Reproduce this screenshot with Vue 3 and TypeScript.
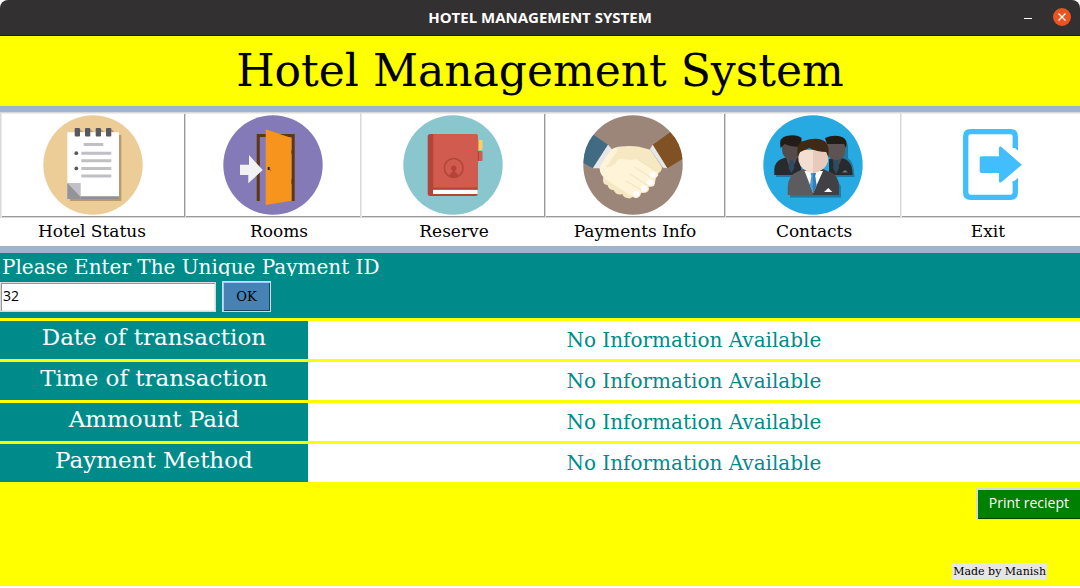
<script setup lang="ts">
import { ref } from 'vue'

interface NavItem {
  id: string
  label: string
}

interface DetailRow {
  name: string
  value: string
}

const navItems: NavItem[] = [
  { id: 'status', label: 'Hotel Status' },
  { id: 'rooms', label: 'Rooms' },
  { id: 'reserve', label: 'Reserve' },
  { id: 'payments', label: 'Payments Info' },
  { id: 'contacts', label: 'Contacts' },
  { id: 'exit', label: 'Exit' },
]

const empty = 'No Information Available'
const rows = ref<DetailRow[]>([
  { name: 'Date of transaction', value: empty },
  { name: 'Time of transaction', value: empty },
  { name: 'Ammount Paid', value: empty },
  { name: 'Payment Method', value: empty },
])

const paymentId = ref('32')
</script>

<template>
  <div class="window">
    <header class="titlebar">
      <span class="titlebar-text">HOTEL MANAGEMENT SYSTEM</span>
      <div class="window-controls">
        <button type="button" class="control" aria-label="Minimize">
          <svg width="10" height="18" viewBox="0 0 10 18"><path d="M1 10.500h8" stroke="#fff" stroke-width="1" /></svg>
        </button>
        <button type="button" class="control" aria-label="Close">
          <svg width="18" height="18" viewBox="0 0 18 18">
            <circle cx="9" cy="9" r="9" fill="#e95420" />
            <path d="M5.500 5.500l7 7M12.500 5.500l-7 7" stroke="#fff" stroke-width="1.300" />
          </svg>
        </button>
      </div>
    </header>

    <main class="content">
      <h1 class="heading">Hotel Management System</h1>

      <nav class="nav">
        <div class="nav-buttons">
          <button v-for="item in navItems" :id="item.id" :key="item.id" type="button" class="nav-button" :class="item.id">
            <svg v-if="item.id === 'status'" class="icon" viewBox="0 0 100 100">
              <circle cx="50" cy="50" r="49.700" fill="#eccd98" />
              <path d="M27 20h51.300v66H27z" fill="#b99a6d" />
              <path d="M24.300 17.300H76V84H24.300z" fill="#fff" />
              <path d="M24.300 81.300H76V84H24.300z" fill="#8f9096" />
              <path d="M24.300 68h13.400v16H24.300z" fill="#c0c0c6" />
              <path d="M24.300 68l13.400 14v2H24.300z" fill="#93949a" />
              <path d="M37 14l3 3h-3zM47.300 14l3 3h-3zM58 14l3 3h-3zM68.300 14l3 3h-3z" fill="#b99a6d" />
              <g fill="#58595e">
                <rect x="31.700" y="13" width="5.300" height="8.500" rx="1" />
                <rect x="42" y="13" width="5.300" height="8.500" rx="1" />
                <rect x="52.700" y="13" width="5.300" height="8.500" rx="1" />
                <rect x="63" y="13" width="5.300" height="8.500" rx="1" />
                <circle cx="33.300" cy="38.200" r="1.900" />
                <circle cx="33.300" cy="53.400" r="1.900" />
              </g>
              <path d="M40.700 29.500h19.600M38.300 38.200h30M38.300 45.800h30M38.300 53.400h30M38.300 61h30" stroke="#bfbfc4" stroke-width="3" />
            </svg>

            <svg v-else-if="item.id === 'rooms'" class="icon" viewBox="0 0 100 100">
              <circle cx="50" cy="50" r="49.700" fill="#847ab8" />
              <path d="M33.700 86V19h38v67h-3.200V22H36.800v64z" fill="#5f3813" />
              <path d="M42.700 14.300L68.500 23v62.700L42.700 90z" fill="#f7941e" />
              <path d="M68.800 35v4M68.800 64v5" stroke="#4a2c14" stroke-width=".6" />
              <path d="M44.700 52h2v3h-2z" fill="#33231a" />
              <path d="M46.500 54l1.400 2" stroke="#7d5a2c" stroke-width=".8" />
              <path d="M17 49.700h9V40l13.700 15-14.400 13.300V60H17z" fill="#f2f2f2" />
            </svg>

            <svg v-else-if="item.id === 'reserve'" class="icon" viewBox="0 0 100 100">
              <circle cx="50" cy="50" r="49.700" fill="#8ac6cd" />
              <rect x="72" y="25" width="7.500" height="10" rx="1" fill="#fbd063" />
              <rect x="72" y="36" width="7.500" height="10" rx="1" fill="#d15b4f" />
              <path d="M74.700 25H76v10h-1.300z" fill="#d6a955" />
              <path d="M74.700 36H76v10h-1.300z" fill="#af4337" />
              <rect x="24.700" y="19" width="50" height="62" rx="2.500" fill="#b44439" />
              <path d="M30.300 19H73q1.700 0 1.700 2v51.500H30.300z" fill="#d15b4f" />
              <path d="M30.300 74h44.400v1H30.300z" fill="#d15b4f" />
              <path d="M30 75h44.700v4H30z" fill="#fff" />
              <circle cx="50.700" cy="53" r="9.400" fill="none" stroke="#b44439" stroke-width="1.500" />
              <circle cx="50.700" cy="53.200" r="2.700" fill="#b44439" />
              <path d="M49.300 54h2.800v3q2.500 1 3.300 5-4.700 2.300-9.400 0 .8-4 3.300-5z" fill="#b44439" />
            </svg>

            <svg v-else-if="item.id === 'payments'" class="icon" viewBox="0 0 100 100">
              <circle cx="50" cy="50" r="49.700" fill="#9c867a" />
              <path d="M10.500 19.700L25 29.700 9.800 53.300.5 48Q.5 32 10.500 19.700z" fill="#416b82" />
              <path d="M87.300 17.300L69.700 29.700l14.600 23.600L99.500 44Q98 28 87.300 17.300z" fill="#805122" />
              <path d="M25 29.700l4 4.600-12 19H9.800z" fill="#e6e7e8" />
              <path d="M69.700 29.700L67 34l13 18.700 4.300.6z" fill="#e6e7e8" />
              <path d="M28 35q4-3.500 10-3.500 10-1 18 .3l11.500 3L79 52q0 5-5 7l-3 12-6 1-1 5-6 1-3 4-5-1q-2 3.500-6 2-4-1-4.500-4-6 2-9-4-5 0-6-5-6 0-4-9z" fill="#f6e8c2" />
              <path d="M16.500 53Q22 43 28 35l4-2-8 15q-2 5 2 4 5-1 8-6 2-3 6-2 8 2 14 0l19 12q4 3 1 6-3 2-6 0 6 4 3 8-3 3-7 0 4 4 0 7-4 2-7-1 2 3-1 6-3 2-6 0L24 65q-7-4-7.500-12z" fill="#fff4d8" />
              <path d="M28 35l5-2q2 0 1 4-5 5-9 13l-6 4-2.500-1Q22 43 28 35z" fill="#fff4d8" />
              <path d="M51.500 52l17 11M43 66l15.500 9M54 44l19 12M47 59l17 11" stroke="#f3e2b7" stroke-width="1" stroke-linecap="round" fill="none" />
              <g fill="#fff">
                <circle cx="69.700" cy="60" r="2.900" />
                <circle cx="67" cy="67.500" r="2.900" />
                <circle cx="60.800" cy="73.500" r="2.900" />
                <circle cx="53.200" cy="78.500" r="2.900" />
              </g>
            </svg>

            <svg v-else-if="item.id === 'contacts'" class="icon" viewBox="0 0 100 100">
              <circle cx="50" cy="50" r="49.700" fill="#27a9e1" />
              <path d="M13 60h24v2H13zM80 23q4 3 5 8v12q6 4 6.500 19H67v-2z" fill="#1f7ba2" />
              <path d="M11.300 60v-6q.5-7 7-10l9-3 11 3v16z" fill="#292a2d" />
              <path d="M23 42l5 15 6-14z" fill="#565258" />
              <path d="M26.500 45h4l1 8-3 5-3-5z" fill="#304a60" />
              <path d="M18.500 29h20v9q-3 7-10 7-7-1-9-7z" fill="#554b4b" />
              <path d="M17.500 33q-2-11 6-12 10-2 15 2v8q-8 2-17-2z" fill="#241c16" />
              <path d="M66 60V44l8-2 8 2q7.500 3 7.700 16z" fill="#292a2d" />
              <path d="M69 42l4 15 6-14z" fill="#4d494e" />
              <path d="M71 45h4l1 8-3 6-3-6z" fill="#304a60" />
              <path d="M63 29h19v9q-2 7-9 7-7-1-10-7z" fill="#5d5352" />
              <path d="M62 23q9-4 17-1 6 2 4 11l-2-4q-7 0-17 0z" fill="#241c16" />
              <path d="M79 57.500l3-2.500 3 2.500z" fill="#76777a" />
              <path d="M27 80h49V68q2 2 2 6v8.500H27z" fill="#1f7ba2" />
              <path d="M24.700 80V72q.5-12 10-15.500l7-3h17.500l6.500 3Q76 60 76 72v8z" fill="#5c5b60" />
              <path d="M50 54h9.500l6.500 3Q76 60 76 72v8H50z" fill="#414145" />
              <path d="M41.500 56l8.700 22L60 56z" fill="#fff" />
              <path d="M47.500 58h5.300l-.7 3 1.500 10-3.500 7-3.300-7 1.500-10z" fill="#4d9bd5" />
              <path d="M50 57v21l3.600-7-1.500-10 .7-3z" fill="#337fb9" />
              <path d="M35.500 35H65v11q-3 10-15 12-12-2-14.500-12z" fill="#f4ddd1" />
              <path d="M50 35h15v11q-3 10-15 12z" fill="#e8cabc" />
              <path d="M34.700 42q-2-15 6-16 14-5 22 1 4 4 2.500 15l-2-5q-9 0-17-4-7 3-9 4z" fill="#3d2a17" />
              <path d="M61 77l4.300-4 4 4z" fill="#fff" />
            </svg>

            <svg v-else class="icon" viewBox="0 0 100 100">
              <path d="M72.300 33V21.500q0-4.800-4.800-4.800h-40q-4.800 0-4.800 4.800v56q0 4.800 4.800 4.800h40q4.800 0 4.800-4.800V66" fill="none" stroke="#42befd" stroke-width="5.300" />
              <path d="M69.600 31l5.400 4.700V30h-5.400zM69.600 67.500l5.400-4.700V68h-5.400z" fill="#42befd" />
              <path d="M38.500 41.300H56v-8q0-3 2.500-1.300l20.300 17.700L58.500 67Q56 68.500 56 66v-8H38.500q-1.800 0-1.800-1.800V43q0-1.700 1.800-1.700z" fill="#42befd" />
            </svg>
          </button>
        </div>
        <div class="nav-labels">
          <label v-for="item in navItems" :key="item.id" :for="item.id">{{ item.label }}</label>
        </div>
      </nav>

      <form class="lookup" @submit.prevent>
        <label class="lookup-label" for="payment-id">Please Enter The Unique Payment ID</label>
        <div class="lookup-row">
          <input id="payment-id" v-model="paymentId" class="lookup-input" type="text" />
          <button type="submit" class="ok-button">OK</button>
        </div>
      </form>

      <table class="details">
        <tbody>
          <tr v-for="row in rows" :key="row.name">
            <th scope="row">{{ row.name }}</th>
            <td>{{ row.value }}</td>
          </tr>
        </tbody>
      </table>

      <button type="button" class="print-button">Print reciept</button>
      <footer class="credit">Made by Manish</footer>
    </main>
  </div>
</template>

<style>
body {
  margin: 0;
  background: #fff;
}
</style>

<style scoped>
.window {
  display: flex;
  flex-direction: column;
  min-height: 100vh;
  box-sizing: border-box;
  padding-bottom: 2px;
  overflow: hidden;
  font-family: "DejaVu Serif", serif;
  color: #000;
}

button,
input {
  box-sizing: border-box;
  margin: 0;
  border-radius: 0;
}

.titlebar {
  display: grid;
  grid-template-columns: 1fr auto 1fr;
  align-items: center;
  height: 36px;
  box-sizing: border-box;
  padding-bottom: 1px;
  border-bottom: 1px solid #1e1c1d;
  border-radius: 8px 8px 0 0;
  background: #333031;
  color: #fff;
  font: bold 15px/20px "Open Sans", sans-serif;
}

.titlebar-text {
  grid-column: 2;
}

.window-controls {
  display: flex;
  justify-content: flex-end;
  gap: 20px;
  padding-right: 9px;
}

.control {
  display: flex;
  padding: 0;
  border: 0;
  background: none;
}

.content {
  display: flex;
  flex: 1;
  flex-direction: column;
  background: #ff0;
}

.heading {
  margin: 0;
  font-size: 44px;
  font-weight: normal;
  line-height: 70px;
  text-align: center;
}

.nav {
  border-top: 6px solid #a2b4cd;
  border-bottom: 7px solid #a2b4cd;
  background: #fff;
}

.nav-buttons {
  display: grid;
  grid-template-columns: repeat(6, 1fr);
}

/* Neighbouring buttons overlap by 6px; the z-index order decides whose edge shows. */
.nav-button {
  position: relative;
  display: flex;
  align-items: center;
  justify-content: center;
  height: 106px;
  margin-right: -6px;
  padding: 0;
  border: 1px solid #d9d9d9;
  background: #fff;
  box-shadow: inset 1px 1px #ececec, inset -1px -1px #999;
}

.status {
  z-index: 6;
}

.rooms {
  z-index: 1;
}

.reserve {
  z-index: 5;
}

.payments {
  z-index: 4;
}

.contacts {
  z-index: 2;
}

.exit {
  z-index: 3;
}

.icon {
  width: 100px;
  height: 100px;
}

.nav-labels {
  display: grid;
  grid-template-columns: 184fr 190fr 160fr 202fr 156fr 192fr;
  height: 28px;
  margin-right: -4px;
  font-size: 17px;
  line-height: 26px;
  text-align: center;
}

.lookup {
  height: 65px;
  background: #008b8b;
}

.lookup-label {
  display: block;
  height: 23px;
  padding-left: 2px;
  overflow: hidden;
  color: #fff;
  font-size: 20px;
  line-height: 28px;
}

.lookup-row {
  display: flex;
  align-items: center;
  gap: 6px;
  padding-top: 5px;
}

.lookup-input {
  width: 216px;
  height: 30px;
  padding: 0 2px 2px;
  border: 1px solid #d9d9d9;
  background: #fff;
  box-shadow: inset 1px 1px #999, inset -1px -1px #ececec;
  color: #000;
  font: 14px "Open Sans", sans-serif;
  outline: 0;
}

.ok-button {
  width: 49px;
  height: 31px;
  padding: 0;
  border: 1px solid #d9d9d9;
  background: #4682b4;
  box-shadow: inset 1px 1px #a9c8ff, inset -1px -1px #23415a;
  color: #000;
  font: 13px "DejaVu Serif", serif;
}

.details {
  width: 100%;
  border-collapse: collapse;
  table-layout: fixed;
}

.details th,
.details td {
  height: 38px;
  box-sizing: content-box;
  padding: 0;
  border-top: 3px solid #ff0;
  font-weight: normal;
  text-align: center;
}

.details th {
  width: 28.5%;
  background: #008b8b;
  color: #fff;
  font-size: 23px;
  line-height: 33px;
  vertical-align: top;
}

.details td {
  background: #fff;
  color: #008b8b;
  font-size: 20px;
  line-height: 38px;
}

.print-button {
  align-self: flex-end;
  height: 32px;
  margin-top: 6px;
  padding: 0 11px 3px 12px;
  border: 1px solid #d9d9d9;
  border-right: 0;
  background: #008000;
  box-shadow: inset 1px 1px #d9d9d9, inset 0 -1px #004000;
  color: #fff;
  font: 14px "Open Sans", sans-serif;
}

.credit {
  align-self: flex-end;
  margin: auto 33px 6px 0;
  padding: 0 1px;
  background: #e6e6e6;
  font-size: 11px;
  line-height: 17px;
}
</style>
